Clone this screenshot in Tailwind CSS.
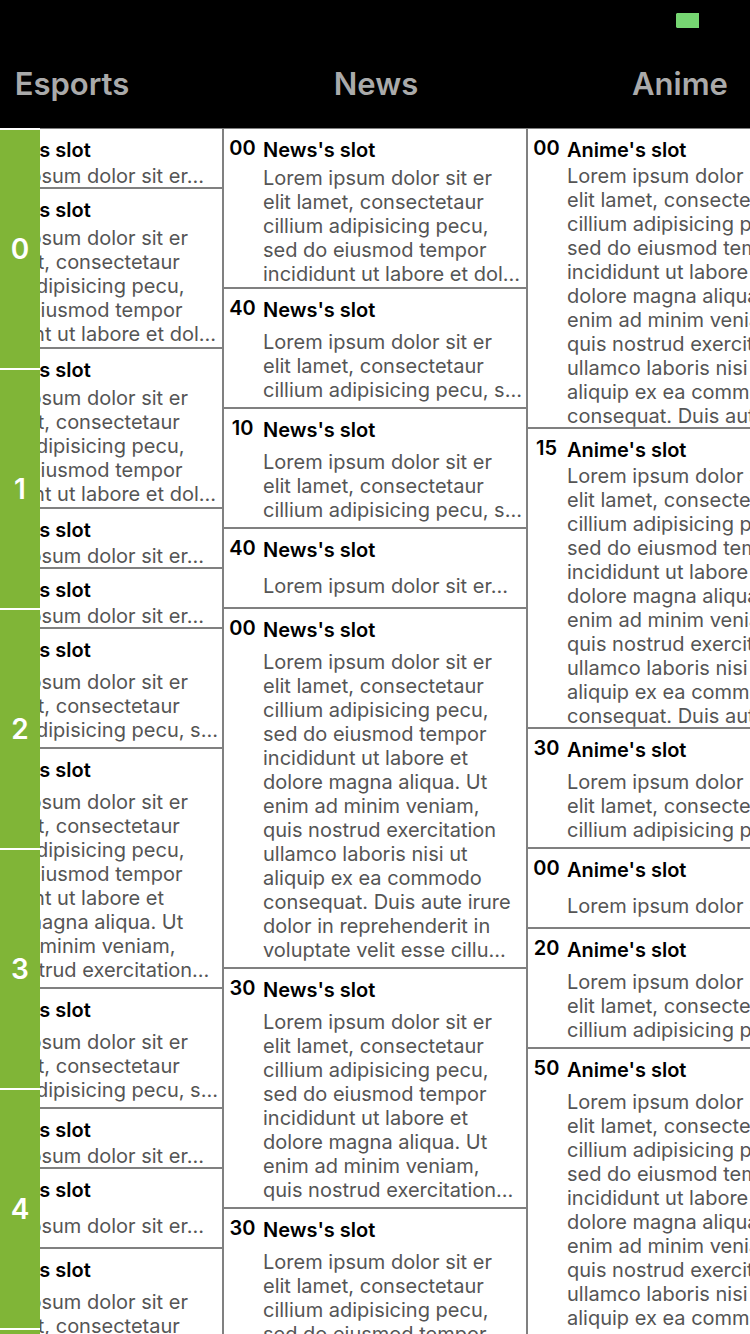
<!DOCTYPE html>
<html lang="en">
<head>
<meta charset="utf-8">
<meta name="viewport" content="width=device-width, initial-scale=1">
<title>Timetable</title>
<script src="https://cdn.jsdelivr.net/npm/@tailwindcss/browser@4"></script>
</head>
<body class="flex h-screen flex-col overflow-hidden bg-white font-['Inter','Liberation_Sans',sans-serif]">
  <header class="flex h-32 shrink-0 flex-col overflow-hidden bg-black">
    <div class="flex h-10 shrink-0 items-center justify-end pr-[51px]">
      <svg class="h-[15px] w-[23px]" viewBox="0 0 23 15" aria-label="Battery"><path d="M1 0H23V15H1L0 14V1Z" fill="#76d672"/></svg>
    </div>
    <div id="channels" class="-ml-20 flex h-[88px] shrink-0 items-center"></div>
  </header>
  <div class="flex min-h-0 flex-1">
    <aside id="hours" class="w-10 shrink-0 overflow-hidden text-[28px] leading-10 font-semibold text-white"></aside>
    <main class="min-w-0 flex-1 overflow-hidden border-t border-[#808080]">
      <div id="board" class="-ml-[120px] flex items-start"></div>
    </main>
  </div>
<script>
  const lines = [
    "Lorem ipsum dolor sit er", "elit lamet, consectetaur", "cillium adipisicing pecu,",
    "sed do eiusmod tempor", "incididunt ut labore et", "dolore magna aliqua. Ut",
    "enim ad minim veniam,", "quis nostrud exercitation", "ullamco laboris nisi ut",
    "aliquip ex ea commodo", "consequat. Duis aute irure", "dolor in reprehenderit in",
    "voluptate velit esse cillu"
  ];
  // Extra characters that fit on a last line before it is cut off.
  const tails = { 3: " s", 5: " dol" };
  const lineCounts = { 15: 1, 20: 1, 30: 3, 40: 5, 60: 8, 75: 11, 90: 13 };
  // Each channel lists its slots by length in minutes; starts follow from the lengths.
  const channels = [
    { name: "Esports", slots: [15, 40, 40, 15, 15, 30, 60, 30, 15, 20, 30] },
    { name: "News", slots: [40, 30, 30, 20, 90, 60, 60] },
    { name: "Anime", slots: [75, 75, 30, 20, 30, 90] }
  ];
  const pad = n => String(n).padStart(2, "0");
  const text = minutes => {
    const n = lineCounts[minutes];
    return lines.slice(0, n).join("<br>") + (tails[n] || "") + "…";
  };

  document.getElementById("channels").innerHTML = channels.map(c =>
    `<h2 class="w-[304px] shrink-0 text-center text-[31px] leading-10 font-semibold text-[#aaaaaa]">${c.name}</h2>`
  ).join("");

  document.getElementById("hours").innerHTML = [0, 1, 2, 3, 4, 5].map(h =>
    `<div class="flex h-60 items-center justify-center border-t-2 border-white bg-[#80b537]">${h}</div>`
  ).join("");

  document.getElementById("board").innerHTML = channels.map(c => {
    let at = 0;
    const slots = c.slots.map(minutes => {
      const start = pad(at % 60);
      at += minutes;
      return `<article class="flex overflow-hidden border-b-2 border-[#808080]" style="height:${minutes * 4}px">
        <time class="mr-0.5 w-[37px] shrink-0 pt-[7px] text-center text-xl leading-6 font-semibold">${start}</time>
        <div class="flex flex-col pt-[9px] text-xl leading-6 whitespace-nowrap">
          <h3 class="font-semibold">${c.name}'s slot</h3>
          <div class="flex flex-1 items-center pt-0.5"><p class="text-[#555555]">${text(minutes)}</p></div>
        </div>
      </article>`;
    }).join("");
    return `<section class="w-[304px] shrink-0 border-r-2 border-[#808080]">${slots}</section>`;
  }).join("");
</script>
</body>
</html>
